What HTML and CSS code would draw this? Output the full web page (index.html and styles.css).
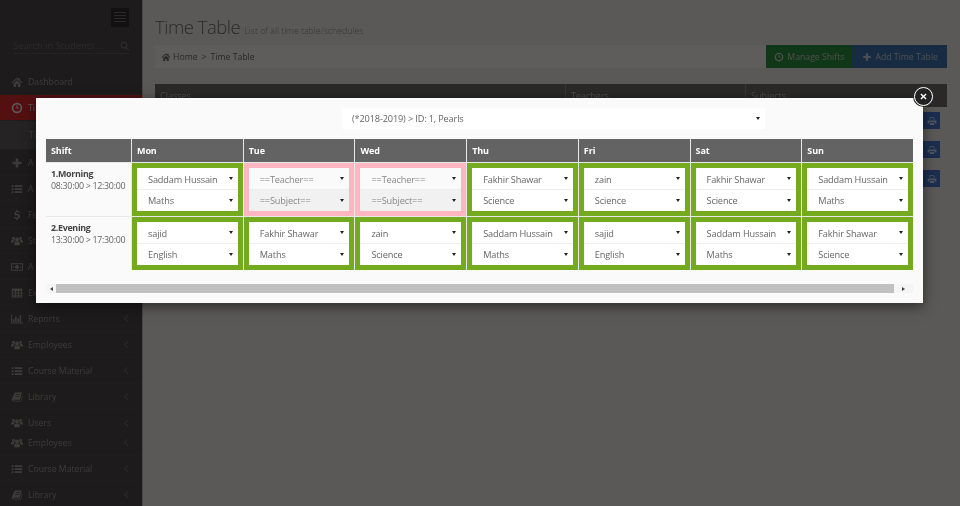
FILE: index.html
```html
<!DOCTYPE html>
<html lang="en">
<head>
    <meta charset="UTF-8">
    <meta name="viewport" content="width=device-width, initial-scale=1.0">
    <title>Time Table</title>
    <link rel="stylesheet" href="styles.css">
</head>
<body>

<svg class="sprite" xmlns="http://www.w3.org/2000/svg">
    <symbol id="i-home" viewBox="0 0 16 16"><path d="M8 2 1 8.500l1 1L8 4l6 5.500 1-1-3-2.800V3h-2v1zM3.500 10v4.500h3.300v-3.500h2.400v3.500h3.300V10L8 5.800z"/></symbol>
    <symbol id="i-clock" viewBox="0 0 16 16"><path d="M8 1a7 7 0 1 0 0 14A7 7 0 0 0 8 1zm0 2.200a4.800 4.800 0 1 1 0 9.600 4.800 4.800 0 0 1 0-9.600zM7.200 4.500v4.300h3.600V7.500H8.600v-3z"/></symbol>
    <symbol id="i-plus" viewBox="0 0 16 16"><path d="M6.300 2h3.400v4.300H14v3.400H9.700V14H6.300V9.700H2V6.300h4.300z"/></symbol>
    <symbol id="i-list" viewBox="0 0 16 16"><path d="M1 3h2.500v2.200H1zm4 0h10v2.200H5zM1 7h2.500v2.200H1zm4 0h10v2.200H5zm-4 4h2.500v2.200H1zm4 0h10v2.200H5z"/></symbol>
    <symbol id="i-dollar" viewBox="0 0 16 16"><path d="M7.200 1h1.600v1.600c1.300.1 2.400.5 3.200 1L11.200 5c-.8-.5-1.700-.9-2.700-.9-1.100 0-1.700.5-1.700 1.100 0 .8.900 1.100 2.200 1.600 1.800.6 3.100 1.400 3.100 3.200 0 1.600-1.200 2.800-3.300 3v2H7.200v-1.900c-1.300-.1-2.600-.6-3.400-1.300l.9-1.500c.9.700 1.900 1.100 3.100 1.100 1.200 0 1.900-.5 1.900-1.300s-.8-1.200-2.100-1.700C5.900 8.800 4.600 8 4.600 6.200c0-1.600 1.100-2.900 2.600-3.200z"/></symbol>
    <symbol id="i-users" viewBox="0 0 16 16"><circle cx="8" cy="6" r="2.600"/><circle cx="3.300" cy="4.600" r="1.900"/><circle cx="12.700" cy="4.600" r="1.900"/><path d="M4.300 13.500V11c0-1.500 1.200-2.300 3.700-2.300s3.700.8 3.700 2.300v2.500zM0 10V8.500c0-1 1-1.700 3.400-1.700.4 0 .8 0 1 .1-.4.900-.1 1.400.2 1.700C3.600 9 3.300 9.500 3.200 10zm16 0V8.500c0-1-1-1.700-3.400-1.700-.4 0-.8 0-1 .1.400.9.100 1.400-.2 1.700 1 .4 1.300.9 1.400 1.400z"/></symbol>
    <symbol id="i-money" viewBox="0 0 16 16"><path d="M0 3h16v10H0zm1.300 1.300v7.400h13.400V4.300zM8 5.300a2.700 2.700 0 1 1 0 5.400 2.700 2.700 0 0 1 0-5.400zM2.500 7h1.500v2H2.500zM12 7h1.500v2H12z"/></symbol>
    <symbol id="i-table" viewBox="0 0 16 16"><path d="M1 2h14v12H1zm1.300 3.200v2.200h3V5.200zm4.300 0v2.200h2.800V5.200zm4.100 0v2.200h3V5.200zM2.300 8.600v1.900h3V8.600zm4.300 0v1.900h2.800V8.600zm4.100 0v1.900h3V8.600zm-8.400 3v1.200h3v-1.200zm4.300 0v1.200h2.800v-1.200zm4.100 0v1.200h3v-1.200z"/></symbol>
    <symbol id="i-chart" viewBox="0 0 16 16"><path d="M0 2h1.200v10.800H16V14H0zm2.500 6h2v4h-2zm3-3h2v7h-2zm3 2h2v5h-2zm3-4h2v9h-2z"/></symbol>
    <symbol id="i-book" viewBox="0 0 16 16"><path d="M5 2h9.500l-2.800 9.500H3.300c-.6 0-.9.300-.9.700 0 .5.400.8 1 .8h9.400l2-7 .7.500-2.200 7.500H3.200C1.900 14 1 13 1 11.800c0-.4 0-.6.200-1zm1.400 2.200-.3 1h5.500l.3-1zm-.7 2.300-.3 1h5.500l.3-1z"/></symbol>
    <symbol id="i-print" viewBox="0 0 16 16"><path d="M4 1.500h6l2 2V6h-1.300V4.200L9.500 2.800H5.300V6H4zM1 7h14v5h-2.500v-2h-9v2H1zm3.500 4h7v3.500h-7z"/></symbol>
    <symbol id="i-search" viewBox="0 0 16 16"><path d="M6.500 1a5.500 5.500 0 0 1 4.400 8.800l4 4-1.400 1.300-4-4A5.500 5.500 0 1 1 6.500 1zm0 2a3.500 3.500 0 1 0 0 7 3.500 3.500 0 0 0 0-7z"/></symbol>
    <symbol id="i-close" viewBox="0 0 16 16"><path d="M4.300 2.500 8 6.200l3.700-3.700 1.800 1.800L9.800 8l3.700 3.700-1.800 1.800L8 9.800l-3.700 3.700-1.800-1.800L6.200 8 2.500 4.300z"/></symbol>
</svg>

<div class="page">
    <aside class="sidebar">
        <div class="toggle"><span></span><span></span><span></span><span></span></div>
        <div class="search">
            <span>Search in Students ...</span>
            <svg class="icon-sm"><use href="#i-search"/></svg>
        </div>
        <nav class="menu">
            <a class="item"><svg><use href="#i-home"/></svg>Dashboard</a>
            <a class="item active"><svg><use href="#i-clock"/></svg>Ti</a>
            <a class="item sub">Ti</a>
            <a class="item"><svg><use href="#i-plus"/></svg>A</a>
            <a class="item"><svg><use href="#i-list"/></svg>A</a>
            <a class="item"><svg><use href="#i-dollar"/></svg>Fe</a>
            <a class="item"><svg><use href="#i-users"/></svg>St</a>
            <a class="item"><svg><use href="#i-money"/></svg>A</a>
            <a class="item"><svg><use href="#i-table"/></svg>Ex</a>
            <a class="item"><svg><use href="#i-chart"/></svg>Reports<i></i></a>
            <a class="item"><svg><use href="#i-users"/></svg>Employees<i></i></a>
            <a class="item"><svg><use href="#i-list"/></svg>Course Material<i></i></a>
            <a class="item"><svg><use href="#i-book"/></svg>Library<i></i></a>
            <a class="item short"><svg><use href="#i-users"/></svg>Users<i></i></a>
            <a class="item"><svg><use href="#i-users"/></svg>Employees<i></i></a>
            <a class="item"><svg><use href="#i-list"/></svg>Course Material<i></i></a>
            <a class="item"><svg><use href="#i-book"/></svg>Library<i></i></a>
        </nav>
    </aside>

    <main class="content">
        <h1>Time Table <small>List of all time table/schedules</small></h1>
        <div class="toolbar">
            <div class="crumbs">
                <svg class="icon-sm"><use href="#i-home"/></svg>Home <b>&gt;</b> Time Table
            </div>
            <a class="btn green"><svg class="icon-sm"><use href="#i-clock"/></svg>Manage Shifts</a>
            <a class="btn blue"><svg class="icon-sm"><use href="#i-plus"/></svg>Add Time Table</a>
        </div>
        <div class="list">
            <div class="list-head">
                <span class="c1">Classes</span>
                <span class="c2">Teachers</span>
                <span class="c3">Subjects</span>
            </div>
            <div class="list-row"><a class="print"><svg class="icon-sm"><use href="#i-print"/></svg></a></div>
            <div class="list-row"><a class="print"><svg class="icon-sm"><use href="#i-print"/></svg></a></div>
            <div class="list-row"><a class="print"><svg class="icon-sm"><use href="#i-print"/></svg></a></div>
        </div>
    </main>

    <div class="backdrop"></div>

    <div class="modal">
        <a class="close"><svg><use href="#i-close"/></svg></a>
        <div class="class-pick pick"><select><option>(*2018-2019) &gt; ID: 1, Pearls</option></select></div>

        <div class="grid">
            <div class="th">Shift</div>
            <div class="th">Mon</div>
            <div class="th">Tue</div>
            <div class="th">Wed</div>
            <div class="th">Thu</div>
            <div class="th">Fri</div>
            <div class="th">Sat</div>
            <div class="th">Sun</div>

            <div class="shift"><b>1.Morning</b>08:30:00 &gt; 12:30:00</div>
            <div class="slot ok"><div class="pick"><select><option>Saddam Hussain</option></select></div><div class="pick"><select><option>Maths</option></select></div></div>
            <div class="slot empty"><div class="pick"><select><option>==Teacher==</option></select></div><div class="pick"><select><option>==Subject==</option></select></div></div>
            <div class="slot empty"><div class="pick"><select><option>==Teacher==</option></select></div><div class="pick"><select><option>==Subject==</option></select></div></div>
            <div class="slot ok"><div class="pick"><select><option>Fakhir Shawar</option></select></div><div class="pick"><select><option>Science</option></select></div></div>
            <div class="slot ok"><div class="pick"><select><option>zain</option></select></div><div class="pick"><select><option>Science</option></select></div></div>
            <div class="slot ok"><div class="pick"><select><option>Fakhir Shawar</option></select></div><div class="pick"><select><option>Science</option></select></div></div>
            <div class="slot ok"><div class="pick"><select><option>Saddam Hussain</option></select></div><div class="pick"><select><option>Maths</option></select></div></div>

            <div class="shift"><b>2.Evening</b>13:30:00 &gt; 17:30:00</div>
            <div class="slot ok"><div class="pick"><select><option>sajid</option></select></div><div class="pick"><select><option>English</option></select></div></div>
            <div class="slot ok"><div class="pick"><select><option>Fakhir Shawar</option></select></div><div class="pick"><select><option>Maths</option></select></div></div>
            <div class="slot ok"><div class="pick"><select><option>zain</option></select></div><div class="pick"><select><option>Science</option></select></div></div>
            <div class="slot ok"><div class="pick"><select><option>Saddam Hussain</option></select></div><div class="pick"><select><option>Maths</option></select></div></div>
            <div class="slot ok"><div class="pick"><select><option>sajid</option></select></div><div class="pick"><select><option>English</option></select></div></div>
            <div class="slot ok"><div class="pick"><select><option>Saddam Hussain</option></select></div><div class="pick"><select><option>Maths</option></select></div></div>
            <div class="slot ok"><div class="pick"><select><option>Fakhir Shawar</option></select></div><div class="pick"><select><option>Science</option></select></div></div>
        </div>

        <div class="scrollbar">
            <span class="arrow left"></span>
            <span class="thumb"></span>
            <span class="arrow right"></span>
        </div>
    </div>
</div>

</body>
</html>
```

FILE: styles.css
```css
html, body {
    margin: 0;
    height: 506px;
    overflow: hidden;
}
body {
    font-family: "Open Sans", sans-serif;
    font-size: 9px;
    color: #666;
}
svg {
    fill: currentColor;
}
.sprite {
    display: none;
}
.icon-sm {
    width: 10px;
    height: 10px;
    flex: none;
}
.page {
    position: relative;
    display: flex;
    width: 960px;
    height: 506px;
    overflow: hidden;
    background-color: #e2dfdc;
    filter: blur(0.55px);
}

/* sidebar */
.sidebar {
    width: 143px;
    flex: none;
    background-color: #494444;
    color: #9a9292;
    border-right: 1px solid #b5b2b0;
    box-sizing: border-box;
}
.toggle {
    width: 18px;
    height: 19px;
    margin: 8px 13px 0 auto;
    padding-top: 4px;
    box-sizing: border-box;
    background-color: #2e2a2a;
}
.toggle span {
    display: block;
    height: 1px;
    margin: 0 3px 2px;
    background-color: #6e6868;
}
.search {
    display: flex;
    justify-content: space-between;
    align-items: center;
    margin: 12px 12px 0 13px;
    padding-bottom: 1px;
    height: 13px;
    border-bottom: 1px solid #5a5555;
    font-size: 9.4px;
    color: #6e6868;
}
.menu {
    margin-top: 15px;
    font-size: 8.7px;
}
.item {
    display: flex;
    align-items: center;
    height: 26px;
    padding: 0 11px;
    box-sizing: border-box;
    border-bottom: 1px solid #4e4a4a;
}
.item svg {
    width: 12px;
    height: 12px;
    margin-right: 5px;
    flex: none;
}
.item i {
    margin-left: auto;
    margin-right: 1px;
    width: 4px;
    height: 4px;
    border-left: 1px solid #6e6868;
    border-bottom: 1px solid #6e6868;
    transform: rotate(45deg);
}
.active {
    background-color: #d22a2c;
    color: #e8d4d4;
}
.sub {
    padding-left: 29px;
    background-color: #5c5858;
    height: 29px;
}
.short {
    height: 20px;
    border-bottom: 0;
    padding-top: 6px;
}

/* page behind the dialog */
.content {
    flex: 1;
    padding: 0 13px 0 12px;
    min-width: 0;
}
h1 {
    margin: 13px 0 0;
    font-size: 18.5px;
    line-height: 27px;
    letter-spacing: -0.5px;
    font-weight: 300;
    color: #6a6a6a;
}
h1 small {
    font-size: 8.8px;
    line-height: 1;
    letter-spacing: 0;
    color: #888;
}
.toolbar {
    display: flex;
    margin-top: 5px;
    height: 23px;
    font-size: 8.7px;
}
.crumbs {
    flex: 1;
    display: flex;
    align-items: center;
    gap: 2px;
    padding-left: 6px;
    background-color: #ebe9e7;
    color: #666;
}
.crumbs b {
    font-weight: 400;
    margin: 0 2px;
}
.btn {
    display: flex;
    align-items: center;
    gap: 3px;
    color: #c4c4c4;
}
.green {
    padding: 0 8px;
    background-color: #2a8a3a;
}
.blue {
    padding: 0 9px 0 10px;
    background-color: #3a6ea8;
}
.list {
    margin-top: 16px;
}
.list-head {
    display: flex;
    height: 23px;
    align-items: center;
    background-color: #6a6664;
    color: #bdbdbd;
}
.list-head span {
    padding-left: 5px;
    height: 100%;
    line-height: 23px;
    box-sizing: border-box;
    border-left: 1px solid #8a8684;
}
.c1 {
    width: 410px;
    border-left: 0 !important;
}
.c2 {
    width: 180px;
}
.list-row {
    display: flex;
    justify-content: flex-end;
    padding: 5px 7px 0 0;
    height: 24px;
}
.print {
    display: flex;
    align-items: center;
    justify-content: center;
    width: 17px;
    height: 17px;
    background-color: #4474c8;
    color: #c8d4ea;
}
.backdrop {
    position: absolute;
    inset: 0;
    background-color: rgba(0, 0, 0, 0.6);
}

/* dialog */
.modal {
    position: absolute;
    left: 36px;
    top: 98px;
    width: 887px;
    height: 205px;
    padding: 10px 10px 0;
    box-sizing: border-box;
    background-color: #fafafa;
    box-shadow: 0 3px 12px rgba(0, 0, 0, 0.55);
}
.close {
    position: absolute;
    right: -10px;
    top: -11px;
    display: flex;
    align-items: center;
    justify-content: center;
    width: 19px;
    height: 19px;
    box-sizing: border-box;
    border: 1.5px solid #fff;
    border-radius: 50%;
    background-color: #222;
    color: #fff;
    box-shadow: 0 0 0 1px #333;
}
.close svg {
    width: 9px;
    height: 9px;
}
.pick {
    position: relative;
    height: 21px;
    background-color: #fff;
}
.pick select {
    display: block;
    width: 100%;
    height: 100%;
    padding: 0 0 0 11px;
    border: 0;
    outline: 0;
    appearance: none;
    background: transparent;
    font-family: "Open Sans", sans-serif;
    font-size: 9.2px;
    letter-spacing: -0.15px;
    color: #666;
}
.slot .pick:first-child select {
    padding-top: 1px;
}
.pick::after {
    content: "";
    position: absolute;
    right: 5px;
    top: 9px;
    border-left: 2px solid transparent;
    border-right: 2px solid transparent;
    border-top: 3px solid #222;
}
.class-pick {
    width: 423px;
    margin: 0 0 10px 296px;
}
.class-pick select {
    padding-left: 10px;
}
.grid {
    display: grid;
    grid-template-columns: 85px repeat(7, 1fr);
    grid-template-rows: 23px 53px 53px;
    gap: 1px;
    background-color: #e8e8e8;
}
.th {
    padding-left: 5px;
    line-height: 23px;
    background-color: #636363;
    color: #fff;
    font-size: 9px;
    letter-spacing: -0.1px;
    font-weight: 700;
}
.shift {
    padding: 5px 0 0 5px;
    line-height: 12px;
    font-size: 8.9px;
    letter-spacing: -0.3px;
    background-color: #fafafa;
}
.shift b {
    display: block;
    color: #444;
}
.slot {
    display: flex;
    flex-direction: column;
    gap: 1px;
    background-color: #eee;
    border: 5px solid;
}
.ok {
    border-color: #74ab1e;
}
.empty {
    border-color: #ffb6c1;
}
.empty .pick {
    background-color: #fafafa;
}
.empty .pick + .pick {
    background-color: #f1f1f1;
}
.empty select {
    color: #888;
}
.scrollbar {
    display: flex;
    align-items: center;
    height: 9px;
    margin-top: 14px;
    background-color: #f5f5f5;
}
.thumb {
    flex: 1;
    height: 100%;
    background-color: #c1c1c1;
}
.arrow {
    width: 10px;
    display: flex;
    justify-content: center;
}
.arrow.right {
    width: 19px;
}
.arrow::before {
    content: "";
    border-top: 2px solid transparent;
    border-bottom: 2px solid transparent;
}
.arrow.left::before {
    border-right: 3px solid #444;
}
.arrow.right::before {
    border-left: 3px solid #444;
}
```
